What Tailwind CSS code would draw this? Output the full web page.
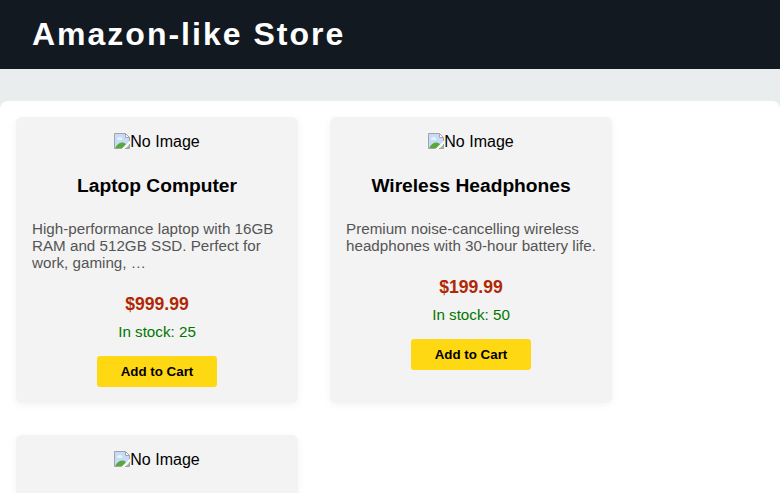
<!DOCTYPE html>
<html lang="en">
<head>
<meta charset="utf-8">
<title>Amazon-like Store</title>
<script src="https://cdn.jsdelivr.net/npm/@tailwindcss/browser@4"></script>
</head>
<body class="h-[493px] overflow-hidden bg-[#eaeded] font-['Liberation_Sans',Arial,sans-serif] text-base text-black">
<svg class="hidden">
  <symbol id="noimg" viewBox="0 0 16 16">
    <path d="M.5 .5H11.5L15.5 4.5V15.5H.5Z" fill="#fff"/>
    <path d="M1 1H11V5H15V9L9 15H1Z" fill="#c6dbf7"/>
    <path d="M3.2 6.5a1.3 1.3 0 0 1 1.2-2 1.8 1.8 0 0 1 3.2.6 1.2 1.2 0 0 1 .6 1.9H3.5Z" fill="#e8f1fc"/>
    <path d="M1 15.5C2.5 12 5 9.6 8 9.6c1.8 0 3.2.7 4 1.6L8 15.5Z" fill="#5aa83c"/>
    <path d="M16 8V10.5L10.5 16H7.5Z" fill="#f8f8f8"/>
    <path d="M11.5 15.5L15.5 11.5V15.5Z" fill="#8fc47a"/>
    <path d="M7.5 15.5H.5V.5H11.5L15.5 4.5V8M11 15.5H15.5V11M11.5 .5V4.5H15.5" fill="none" stroke="#a0a4aa"/>
  </symbol>
</svg>
<header class="bg-[#131921] px-8 py-4">
  <h1 class="text-[32px] leading-[37px] font-bold tracking-[2px] text-white">Amazon-like Store</h1>
</header>
<main class="mt-8 flex h-[392px] flex-wrap content-start gap-8 overflow-hidden rounded-t-lg bg-white p-4">
  <article class="flex w-[282px] flex-col items-center rounded-md bg-[#f3f3f3] p-4 shadow-[0_2px_8px_rgba(0,0,0,0.05)]">
    <div class="flex h-[18px] leading-[18px]"><svg class="size-4"><use href="#noimg"/></svg>No Image</div>
    <h3 class="mt-6 text-[19.2px] leading-[22px] font-bold">Laptop Computer</h3>
    <p class="mt-[23px] w-full text-[15.2px] leading-[17px] text-[#555]">High-performance laptop with 16GB RAM and 512GB SSD. Perfect for work, gaming, …</p>
    <div class="mt-[23px] text-[17.6px] leading-5 font-bold text-[#b12704]">$999.99</div>
    <div class="mt-[9px] text-[15.2px] leading-[17px] text-[#007600]">In stock: 25</div>
    <button class="mt-4 h-[31px] w-[120px] rounded-[3px] bg-[#ffd814] text-[13.333px] font-bold">Add to Cart</button>
  </article>
  <article class="flex w-[282px] flex-col items-center rounded-md bg-[#f3f3f3] p-4 shadow-[0_2px_8px_rgba(0,0,0,0.05)]">
    <div class="flex h-[18px] leading-[18px]"><svg class="size-4"><use href="#noimg"/></svg>No Image</div>
    <h3 class="mt-6 text-[19.2px] leading-[22px] font-bold">Wireless Headphones</h3>
    <p class="mt-[23px] w-full text-[15.2px] leading-[17px] text-[#555]">Premium noise-cancelling wireless headphones with 30-hour battery life.</p>
    <div class="mt-[23px] text-[17.6px] leading-5 font-bold text-[#b12704]">$199.99</div>
    <div class="mt-[9px] text-[15.2px] leading-[17px] text-[#007600]">In stock: 50</div>
    <button class="mt-4 h-[31px] w-[120px] rounded-[3px] bg-[#ffd814] text-[13.333px] font-bold">Add to Cart</button>
  </article>
  <article class="flex h-[286px] w-[282px] flex-col items-center rounded-md bg-[#f3f3f3] p-4 shadow-[0_2px_8px_rgba(0,0,0,0.05)]">
    <div class="flex h-[18px] leading-[18px]"><svg class="size-4"><use href="#noimg"/></svg>No Image</div>
  </article>
</main>
</body>
</html>
